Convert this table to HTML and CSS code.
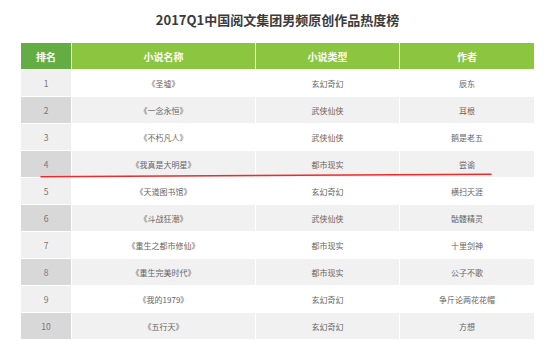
FILE: index.html
```html
<!DOCTYPE html>
<html lang="zh-CN">
<head>
<meta charset="utf-8">
<title>2017Q1中国阅文集团男频原创作品热度榜</title>
<link rel="stylesheet" href="styles.css">
</head>
<body>
<div class="page">
  <h1 class="title">2017Q1中国阅文集团男频原创作品热度榜</h1>
  <div class="table">
    <div class="th th-rank">排名</div>
    <div class="th">小说名称</div>
    <div class="th">小说类型</div>
    <div class="th">作者</div>

    <div class="td rank odd">1</div><div class="td odd">《圣墟》</div><div class="td odd">玄幻奇幻</div><div class="td odd">辰东</div>
    <div class="td rank even">2</div><div class="td even">《一念永恒》</div><div class="td even">武侠仙侠</div><div class="td even">耳根</div>
    <div class="td rank odd">3</div><div class="td odd">《不朽凡人》</div><div class="td odd">武侠仙侠</div><div class="td odd">鹅是老五</div>
    <div class="td rank even">4</div><div class="td even">《我真是大明星》</div><div class="td even">都市现实</div><div class="td even">尝谕</div>
    <div class="td rank odd">5</div><div class="td odd">《天道图书馆》</div><div class="td odd">玄幻奇幻</div><div class="td odd">横扫天涯</div>
    <div class="td rank even">6</div><div class="td even">《斗战狂潮》</div><div class="td even">武侠仙侠</div><div class="td even">骷髅精灵</div>
    <div class="td rank odd">7</div><div class="td odd">《重生之都市修仙》</div><div class="td odd">都市现实</div><div class="td odd">十里剑神</div>
    <div class="td rank even">8</div><div class="td even">《重生完美时代》</div><div class="td even">都市现实</div><div class="td even">公子不歌</div>
    <div class="td rank odd">9</div><div class="td odd">《我的1979》</div><div class="td odd">玄幻奇幻</div><div class="td odd">争斤论两花花帽</div>
    <div class="td rank even">10</div><div class="td even">《五行天》</div><div class="td even">玄幻奇幻</div><div class="td even">方想</div>
  </div>
  <svg class="markup" width="554" height="345" viewBox="0 0 554 345" aria-hidden="true">
    <line x1="41" y1="176.7" x2="491" y2="174.2" stroke="#ee2b2b" stroke-width="1.5" stroke-linecap="round"/>
  </svg>
</div>
</body>
</html>
```
FILE: styles.css
```css
* { box-sizing: border-box; }
html, body { margin: 0; padding: 0; background: #ffffff; }
body {
  font-family: "Noto Sans CJK SC", "Noto Sans", "Liberation Sans", sans-serif;
}
.page {
  position: relative;
  width: 554px;
  height: 345px;
  padding-left: 21px;
  overflow: hidden;
}
.title {
  margin: 0;
  width: 513px;
  height: 43px;
  padding-top: 10px;
  font-size: 13px;
  line-height: 20px;
  font-weight: 700;
  color: #3b3b3b;
  text-align: center;
}
.table {
  display: grid;
  grid-template-columns: 50px 183px 143px 134px;
  grid-auto-rows: 26px;
  gap: 1px;
  width: 513px;
}
.th {
  display: flex;
  align-items: center;
  justify-content: center;
  background: #8cc540;
  color: #ffffff;
  font-size: 10px;
  font-weight: 700;
}
.th-rank { background: #64ad45; }
.td {
  display: flex;
  align-items: center;
  justify-content: center;
  font-size: 8px;
  color: #666666;
}
.td.odd { background: #ffffff; }
.td.even { background: #f1f1f1; }
.td.rank { font-size: 8.5px; color: #777777; }
.td.rank.odd { background: #f0f0f0; }
.td.rank.even { background: #d8d8d8; }
.markup {
  position: absolute;
  left: 0;
  top: 0;
  pointer-events: none;
}
```
